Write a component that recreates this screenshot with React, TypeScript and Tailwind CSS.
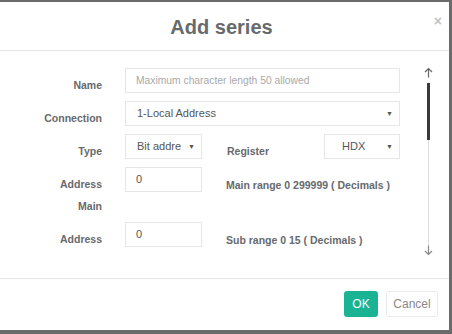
import React from 'react';

const font = { fontFamily: '"Liberation Sans", Arial, sans-serif' };

const Caret = () => <span className="text-[7px] text-[#555] leading-none">▼</span>;

const Box: React.FC<{ w: string; children?: React.ReactNode; pl?: string; caret?: boolean }> = ({ w, children, pl = 'pl-[11px]', caret }) => (
  <div className={`${w} h-[25px] border border-[#e5e6e7] flex items-center justify-between ${pl} pr-[6px] text-[11px] text-[#555] bg-white`}>
    <span className="whitespace-nowrap overflow-hidden">{children}</span>
    {caret && <Caret />}
  </div>
);

const Label: React.FC<{ children: React.ReactNode }> = ({ children }) => (
  <div className="w-[102px] shrink-0 text-right pt-[10px] text-[10.5px] leading-[14px] font-bold text-[#676a6c]">{children}</div>
);

export default function App() {
  return (
    <div className="w-[452px] h-[334px] bg-[#6b6b6b] pt-[2px]" style={font}>
      <div className="w-[449px] h-[328px] bg-white flex flex-col">
        {/* header */}
        <div className="h-[49px] border-b border-[#e5e5e5] relative flex items-center justify-center">
          <h1 className="text-[20px] font-bold text-[#676a6c] mt-[1px] ml-[-6px]">Add series</h1>
          <span className="absolute right-[7px] top-[9px] text-[14px] text-[#c4c4c4] font-bold">×</span>
        </div>

        {/* body */}
        <div className="h-[228px] border-b border-[#e5e5e5] flex">
          <div className="flex-1 pt-[17px] flex flex-col">
            <div className="flex gap-[23px] h-[33px]">
              <Label>Name</Label>
              <div className="w-[275px] h-[25px] border border-[#e5e6e7] flex items-center pl-[10px] text-[10.3px] text-[#a9a9a9] whitespace-nowrap">
                Maximum character length 50 allowed
              </div>
            </div>
            <div className="flex gap-[23px] h-[33px]">
              <Label>Connection</Label>
              <Box w="w-[275px]" caret>1-Local Address</Box>
            </div>
            <div className="flex gap-[23px] h-[33px]">
              <Label>Type</Label>
              <Box w="w-[77px]" caret>Bit addre</Box>
              <div className="pt-[10px] text-[10.5px] leading-[14px] font-bold text-[#676a6c] w-[74px] shrink-0 ml-[2px]">Register</div>
              <Box w="w-[76px]" pl="pl-[17px]" caret>HDX</Box>
            </div>
            <div className="flex gap-[23px]">
              <div className="w-[102px] shrink-0 text-right pt-[10px] text-[10.5px] font-bold text-[#676a6c]">
                <div className="leading-[14px]">Address</div>
                <div className="leading-[14px] mt-[8px]">Main</div>
              </div>
              <Box w="w-[77px]" pl="pl-[10px]">0</Box>
              <div className="pt-[11px] text-[10.5px] leading-[14px] font-bold text-[#676a6c] whitespace-nowrap ml-[1px]">Main range 0 299999 ( Decimals )</div>
            </div>
            <div className="flex gap-[23px] mt-[9px]">
              <Label>Address</Label>
              <Box w="w-[77px]" pl="pl-[10px]">0</Box>
              <div className="pt-[11px] text-[10.5px] leading-[14px] font-bold text-[#676a6c] whitespace-nowrap ml-[1px]">Sub range 0 15 ( Decimals )</div>
            </div>
          </div>

          {/* scrollbar */}
          <div className="w-[20px] mr-[11px] flex flex-col items-center pt-[16px]">
            <svg width="9" height="11" viewBox="0 0 9 11" className="text-[#666]">
              <path d="M4.5 1.5V10.5M1 5L4.5 1.5L8 5" fill="none" stroke="currentColor" strokeWidth="1.2" />
            </svg>
            <div className="w-[3px] h-[57px] bg-[#3a3a3a] mt-[5px]" />
            <div className="w-[1px] h-[105px] bg-[#dcdcdc]" />
            <svg width="9" height="11" viewBox="0 0 9 11" className="text-[#888]">
              <path d="M4.5 0.5V9.5M1 6L4.5 9.5L8 6" fill="none" stroke="currentColor" strokeWidth="1.2" />
            </svg>
          </div>
        </div>

        {/* footer */}
        <div className="flex justify-end items-start pt-[12px] pr-[11px] gap-[8px]">
          <button className="w-[34px] h-[26px] rounded-[3px] bg-[#1ab394] text-white text-[12px]">OK</button>
          <button className="w-[52px] h-[26px] rounded-[3px] border border-[#e7eaec] bg-white text-[#888] text-[12px]">Cancel</button>
        </div>
      </div>
    </div>
  );
}
